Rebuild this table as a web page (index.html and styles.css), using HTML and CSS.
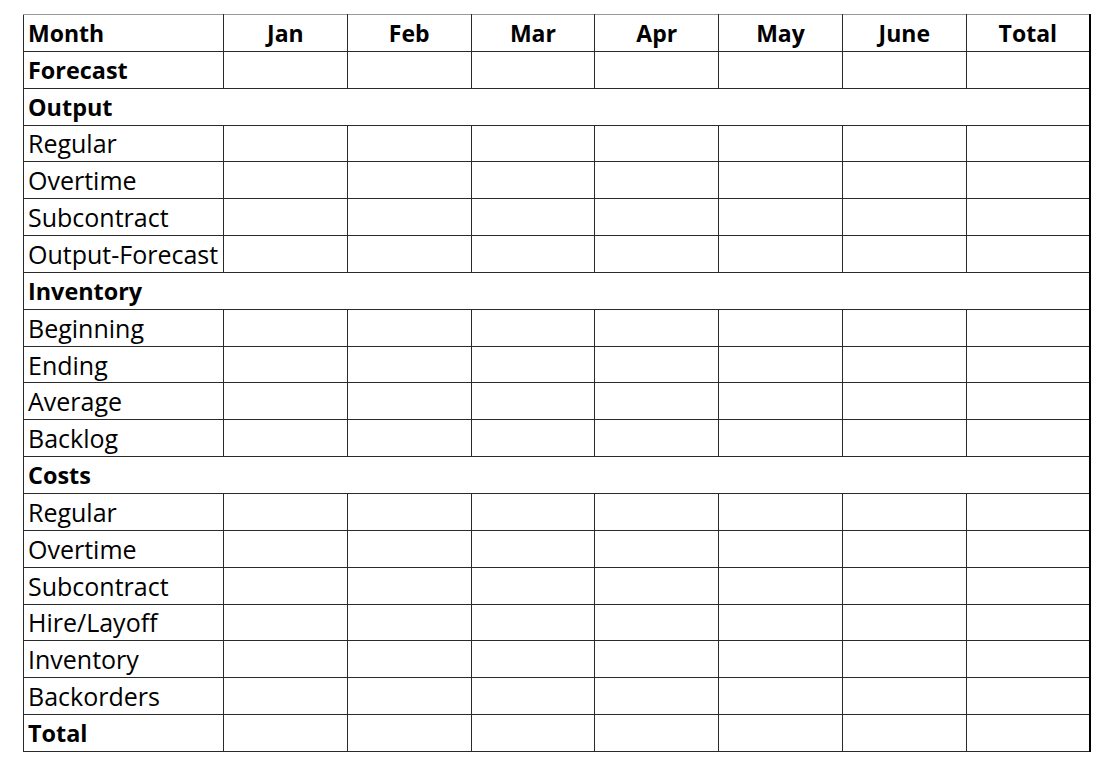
FILE: index.html
```html
<!DOCTYPE html>
<html>
<head>
<meta charset="utf-8">
<link rel="stylesheet" href="styles.css">
</head>
<body>
<table class="plan">
  <colgroup>
    <col class="c-label"><col class="c-m"><col class="c-m"><col class="c-m"><col class="c-m"><col class="c-m"><col class="c-m"><col class="c-m">
  </colgroup>
  <tr class="head"><th class="label">Month</th><th>Jan</th><th>Feb</th><th>Mar</th><th>Apr</th><th>May</th><th>June</th><th>Total</th></tr>
  <tr><td class="label b">Forecast</td><td></td><td></td><td></td><td></td><td></td><td></td><td></td></tr>
  <tr><td class="label b" colspan="8">Output</td></tr>
  <tr><td class="label">Regular</td><td></td><td></td><td></td><td></td><td></td><td></td><td></td></tr>
  <tr><td class="label">Overtime</td><td></td><td></td><td></td><td></td><td></td><td></td><td></td></tr>
  <tr><td class="label">Subcontract</td><td></td><td></td><td></td><td></td><td></td><td></td><td></td></tr>
  <tr><td class="label">Output-Forecast</td><td></td><td></td><td></td><td></td><td></td><td></td><td></td></tr>
  <tr><td class="label b" colspan="8">Inventory</td></tr>
  <tr><td class="label">Beginning</td><td></td><td></td><td></td><td></td><td></td><td></td><td></td></tr>
  <tr><td class="label">Ending</td><td></td><td></td><td></td><td></td><td></td><td></td><td></td></tr>
  <tr><td class="label">Average</td><td></td><td></td><td></td><td></td><td></td><td></td><td></td></tr>
  <tr><td class="label">Backlog</td><td></td><td></td><td></td><td></td><td></td><td></td><td></td></tr>
  <tr><td class="label b" colspan="8">Costs</td></tr>
  <tr><td class="label">Regular</td><td></td><td></td><td></td><td></td><td></td><td></td><td></td></tr>
  <tr><td class="label">Overtime</td><td></td><td></td><td></td><td></td><td></td><td></td><td></td></tr>
  <tr><td class="label">Subcontract</td><td></td><td></td><td></td><td></td><td></td><td></td><td></td></tr>
  <tr><td class="label">Hire/Layoff</td><td></td><td></td><td></td><td></td><td></td><td></td><td></td></tr>
  <tr><td class="label">Inventory</td><td></td><td></td><td></td><td></td><td></td><td></td><td></td></tr>
  <tr><td class="label">Backorders</td><td></td><td></td><td></td><td></td><td></td><td></td><td></td></tr>
  <tr><td class="label b">Total</td><td></td><td></td><td></td><td></td><td></td><td></td><td></td></tr>
</table>
</body>
</html>
```
FILE: styles.css
```css
html, body {
  margin: 0;
  padding: 0;
  background: #ffffff;
}
body {
  padding: 14px 0 0 23px;
  font-family: "Open Sans", "Liberation Sans", sans-serif;
  color: #000;
}
.plan {
  border-collapse: collapse;
  table-layout: fixed;
  width: 1068px;
  border-top: 1px solid #999;
  border-left: 1px solid #777;
  border-right: 2px solid #000;
  border-bottom: 1px solid #333;
}
.c-label { width: 200px; }
.plan tr { height: 36.85px; }
.plan td, .plan th {
  border: 1px solid #2a2a2a;
  padding: 0;
  font-size: 25px;
  line-height: 28px;
  font-weight: 400;
  vertical-align: middle;
}
.plan th {
  font-weight: 700;
  text-align: center;
  border-top-color: #999;
  font-size: 23px;
}
.plan th.label, .plan td.label {
  text-align: left;
  padding: 0 0 0 4px;
  white-space: nowrap;
}
.plan .b { font-weight: 700; font-size: 23.4px; }
```
